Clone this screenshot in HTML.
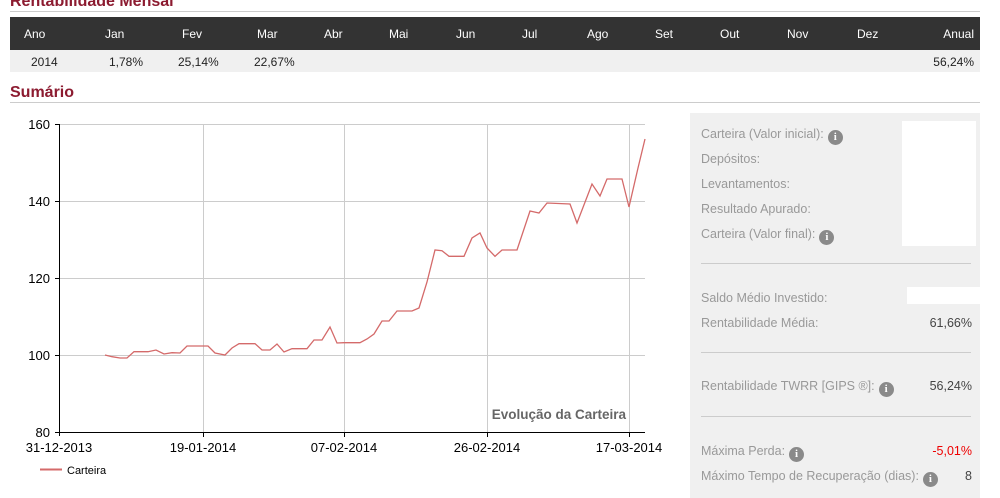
<!DOCTYPE html>
<html><head><meta charset="utf-8"><style>
body{margin:0;width:1000px;height:498px;overflow:hidden;background:#fff;font-family:"Liberation Sans",Arial,sans-serif;position:relative}
.a{position:absolute;white-space:nowrap}
.t{color:#8c1b30;font-weight:bold;font-size:16px}
.hr{position:absolute;left:10px;width:970px;height:1px;background:#ccc}
.h{color:#fff;font-size:12px;top:27px}
.r{color:#222;font-size:12px;top:55px}
.l{color:#999;font-size:12.5px}
.v{color:#444;font-size:12.5px;right:28px}
.i{display:inline-block;width:15px;height:15px;border-radius:8px;background:#8a8a8a;color:#fff;font-size:11px;font-weight:bold;text-align:center;line-height:15px;vertical-align:-2px;margin-left:4px;font-family:"Liberation Serif",serif}
.sep{position:absolute;left:701px;width:270px;height:1px;background:#ccc}
</style></head><body>
<div class="a t" style="left:10px;top:-7px">Rentabilidade Mensal</div>
<div class="hr" style="top:11px"></div>
<div class="a" style="left:10px;top:17px;width:970px;height:33px;background:#333"></div>
<div class="a" style="left:10px;top:50px;width:970px;height:22px;background:#f0f0f0"></div>
<div class="a h" style="left:24px">Ano</div><div class="a h" style="left:105px">Jan</div><div class="a h" style="left:182px">Fev</div><div class="a h" style="left:257px">Mar</div><div class="a h" style="left:324px">Abr</div><div class="a h" style="left:389px">Mai</div><div class="a h" style="left:456px">Jun</div><div class="a h" style="left:522px">Jul</div><div class="a h" style="left:587px">Ago</div><div class="a h" style="left:655px">Set</div><div class="a h" style="left:720px">Out</div><div class="a h" style="left:787px">Nov</div><div class="a h" style="left:857px">Dez</div><div class="a h" style="right:26px">Anual</div>
<div class="a r" style="left:31px">2014</div><div class="a r" style="left:109px">1,78%</div><div class="a r" style="left:178px">25,14%</div><div class="a r" style="left:254px">22,67%</div><div class="a r" style="right:26px">56,24%</div>
<div class="a t" style="left:10px;top:84px">Sumário</div>
<div class="hr" style="top:102px"></div>
<svg class="a" style="left:0;top:110px" width="680" height="388">
<g stroke="#ccc" stroke-width="1">
<line x1="59" y1="14.5" x2="645" y2="14.5"/><line x1="59" y1="91.5" x2="645" y2="91.5"/><line x1="59" y1="168.5" x2="645" y2="168.5"/><line x1="59" y1="245.5" x2="645" y2="245.5"/>
<line x1="203.5" y1="14" x2="203.5" y2="322"/><line x1="344.5" y1="14" x2="344.5" y2="322"/><line x1="487.5" y1="14" x2="487.5" y2="322"/><line x1="629.5" y1="14" x2="629.5" y2="322"/>
</g>
<g stroke="#000" stroke-width="1"><line x1="59.5" y1="14" x2="59.5" y2="326"/><line x1="55" y1="322.5" x2="645" y2="322.5"/>
<line x1="55" y1="14.5" x2="59" y2="14.5"/><line x1="55" y1="91.5" x2="59" y2="91.5"/><line x1="55" y1="168.5" x2="59" y2="168.5"/><line x1="55" y1="245.5" x2="59" y2="245.5"/>
<line x1="203.5" y1="322" x2="203.5" y2="327"/><line x1="344.5" y1="322" x2="344.5" y2="327"/><line x1="487.5" y1="322" x2="487.5" y2="327"/><line x1="629.5" y1="322" x2="629.5" y2="327"/></g>
<polyline fill="none" stroke="#d46a6a" stroke-width="1.3" transform="translate(0,-110)" points="105,355 112,356.7 120,358 127,358 134,351.7 148,351.7 156,350 164,354 172,352.7 180,353 187,346 208,346 215,353 225,355 232,348 239,343.7 255,343.7 262,350 270,350 277,344 284,352 292,348.7 307,348.7 314,340 322,340 330,327 337,343 344,342.7 360,342.7 367,339 374,334 382,321 389,321 397,311 412,311 419,308 427,282 435,250 442,250.7 449,256.3 464,256.3 472,238 480,233 487,248 495,256.3 502,250 517,250 530,211 539,213 547,203 570,204 577,223 592,184 600,196 607,179 622,179 629,207 638,168 645,139"/>
<g font-size="13" fill="#000" font-family="Liberation Sans,sans-serif" text-anchor="end">
<text x="50" y="19">160</text><text x="50" y="96">140</text><text x="50" y="173">120</text><text x="50" y="250">100</text><text x="50" y="327">80</text></g>
<g font-size="13" fill="#000" font-family="Liberation Sans,sans-serif" text-anchor="middle">
<text x="59" y="342">31-12-2013</text><text x="203" y="342">19-01-2014</text><text x="344" y="342">07-02-2014</text><text x="487" y="342">26-02-2014</text><text x="629" y="342">17-03-2014</text></g>
<text x="626" y="309" font-size="13.5" font-weight="bold" fill="#666" text-anchor="end" font-family="Liberation Sans,sans-serif">Evolução da Carteira</text>
<line x1="40" y1="359.5" x2="62" y2="359.5" stroke="#d46a6a" stroke-width="2"/>
<text x="67" y="364" font-size="11" fill="#000" font-family="Liberation Sans,sans-serif">Carteira</text>
</svg>
<div class="a" style="left:690px;top:113px;width:290px;height:385px;background:#f0f0f0"></div>
<div class="a" style="left:902px;top:121px;width:74px;height:125px;background:#fff"></div>
<div class="a" style="left:907px;top:287px;width:73px;height:17px;background:#fff"></div>
<div class="a l" style="left:701px;top:127px">Carteira (Valor inicial):<span class="i">i</span></div>
<div class="a l" style="left:701px;top:152px">Depósitos:</div>
<div class="a l" style="left:701px;top:177px">Levantamentos:</div>
<div class="a l" style="left:701px;top:202px">Resultado Apurado:</div>
<div class="a l" style="left:701px;top:227px">Carteira (Valor final):<span class="i">i</span></div>
<div class="sep" style="top:263px"></div>
<div class="a l" style="left:701px;top:291px">Saldo Médio Investido:</div>
<div class="a l" style="left:701px;top:316px">Rentabilidade Média:</div><div class="a v" style="top:316px">61,66%</div>
<div class="sep" style="top:352px"></div>
<div class="a l" style="left:701px;top:379px">Rentabilidade TWRR [GIPS ®]:<span class="i">i</span></div><div class="a v" style="top:379px">56,24%</div>
<div class="sep" style="top:416px"></div>
<div class="a l" style="left:701px;top:444px">Máxima Perda:<span class="i">i</span></div><div class="a v" style="top:444px;color:#e00">-5,01%</div>
<div class="a l" style="left:701px;top:469px">Máximo Tempo de Recuperação (dias):<span class="i">i</span></div><div class="a v" style="top:469px">8</div>
</body></html>
